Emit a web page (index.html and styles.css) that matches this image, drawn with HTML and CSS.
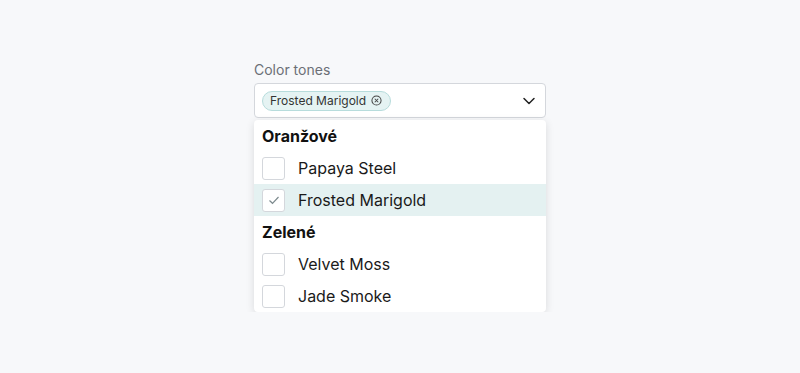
FILE: index.html
```html
<!DOCTYPE html>
<html lang="cs">
<head>
  <meta charset="UTF-8">
  <meta name="viewport" content="width=device-width, initial-scale=1.0">
  <title>Color tones</title>
  <link rel="stylesheet" href="styles.css">
</head>
<body>
  <div class="field">
    <label class="label">Color tones</label>
    <div class="select">
      <span class="chip">Frosted Marigold
        <svg class="chip-x" width="11" height="11" viewBox="0 0 12 12"><circle cx="6" cy="6" r="5" fill="none" stroke="#444" stroke-width="1.1"/><path d="M4.1 4.1l3.8 3.8M7.9 4.1l-3.8 3.8" stroke="#444" stroke-width="1.1"/></svg>
      </span>
      <svg class="chevron" width="14" height="14" viewBox="0 0 14 14"><path d="M2 4.5l5 5 5-5" fill="none" stroke="#222" stroke-width="1.5" stroke-linecap="round" stroke-linejoin="round"/></svg>
    </div>

    <!-- Rozbalovaci seznam -->
    <div class="menu">
      <div class="group">Oranžové</div>
      <div class="option"><span class="box"></span>Papaya Steel</div>
      <div class="option selected"><span class="box"><svg width="14" height="14" viewBox="0 0 14 14"><path d="M2.5 7.5l3 2.8L11.5 4" fill="none" stroke="#7d8a8e" stroke-width="1.2"/></svg></span>Frosted Marigold</div>
      <div class="group">Zelené</div>
      <div class="option"><span class="box"></span>Velvet Moss</div>
      <div class="option"><span class="box"></span>Jade Smoke</div>
    </div>
  </div>
</body>
</html>
```

FILE: styles.css
```css
body {
  margin: 0;
  background: #f7f8fa;
  font-family: Inter, "Noto Sans", sans-serif;
  color: #111;
}
.field {
  width: 292px;
  margin: 61px auto 0;
}
.label {
  display: block;
  font-size: 14px;
  color: #6b6f76;
  margin-bottom: 4px;
  line-height: 18px;
}
.select {
  height: 35px;
  box-sizing: border-box;
  background: #fff;
  border: 1px solid #d4d7dc;
  border-radius: 4px;
  display: flex;
  align-items: center;
  padding: 0 8px 0 7px;
}
.chip {
  display: flex;
  align-items: center;
  gap: 5px;
  height: 20px;
  box-sizing: border-box;
  padding: 0 8px 0 7px;
  font-size: 12px;
  color: #333;
  background: #e5f3f3;
  border: 1px solid #b7dcdc;
  border-radius: 10px;
}
.chip-x {
  display: block;
}
.chevron {
  margin-left: auto;
  margin-right: 1px;
}
.menu {
  margin-top: 2px;
  background: #fff;
  border-radius: 4px;
  box-shadow: 0 2px 8px rgba(0, 0, 0, 0.12);
  overflow: hidden;
}
.group {
  height: 32px;
  display: flex;
  align-items: center;
  padding-left: 8px;
  font-size: 16px;
  font-weight: 700;
}
.option {
  height: 32px;
  display: flex;
  align-items: center;
  padding-left: 8px;
  font-size: 16px;
  color: #1a1a1a;
}
.option.selected {
  background: #e4f1f1;
}
.box {
  width: 23px;
  height: 23px;
  box-sizing: border-box;
  border: 1px solid #d4d7dc;
  border-radius: 3px;
  background: #fff;
  margin-right: 13px;
  display: flex;
  align-items: center;
  justify-content: center;
}
```
